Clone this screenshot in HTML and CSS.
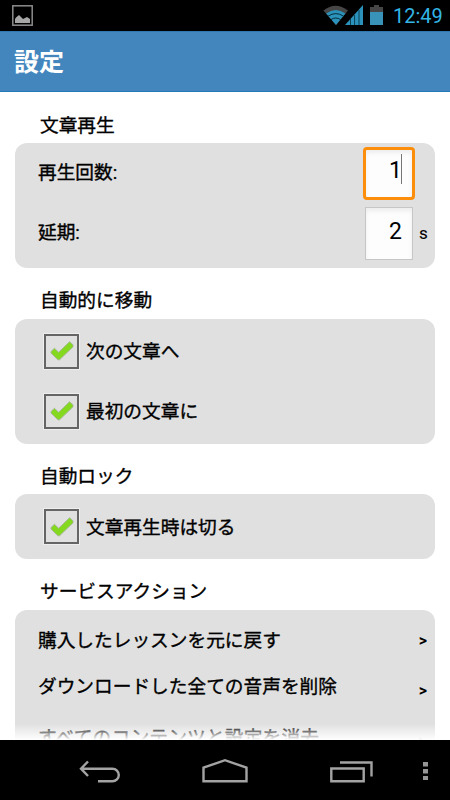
FILE: index.html
```html
<!DOCTYPE html>
<html lang="ja">
<head>
    <meta charset="UTF-8">
    <meta name="viewport" content="width=device-width, initial-scale=1.0">
    <title>設定</title>
    <link rel="stylesheet" href="styles.css">
</head>
<body>
    <div class="status-bar">
        <svg class="picture-icon" width="21" height="21" viewBox="0 0 21 21">
            <rect x="0.8" y="0.8" width="19.4" height="19.4" fill="none" stroke="#8c8c8c" stroke-width="1.5"/>
            <path d="M3 18v-4l1-1.500 3-2.500 4 4 4-2 3 2v4z" fill="#a6a6a6"/>
        </svg>
        <div class="status-icons">
            <svg width="62" height="22" viewBox="0 0 62 22">
                <path d="M13 20L0.4 5.6Q12.5 -4.2 25 5.6z" fill="#464646"/>
                <path d="M13 20L3.2 8.6Q12.7 1.6 22.4 8.6z" fill="#2b93bb"/>
                <path d="M5 11.2Q12.8 6 20.6 11.2M8 14.6Q12.8 11.4 17.6 14.6" fill="none" stroke="#062a38" stroke-width="1"/>
                <path d="M22 20L40 0V20z" fill="#2b93bb"/>
                <path d="M27.5 14V20M31.6 10V20M36 5V20" stroke="#0c3f52" stroke-width="1"/>
                <path d="M47 2h4V0h5v2h4v6H47z" fill="#464646"/>
                <path d="M47 7h13v13H47z" fill="#3993b8"/>
            </svg>
            <span class="clock">12:49</span>
        </div>
    </div>

    <header class="title-bar">
        <h1>設定</h1>
    </header>

    <main class="settings">
        <h2>文章再生</h2>
        <section class="card">
            <div class="row number-row">
                <label for="repeat">再生回数:</label>
                <div class="number focused" id="repeat">1<span class="caret"></span></div>
                <span class="unit"></span>
            </div>
            <div class="row number-row">
                <label for="delay">延期:</label>
                <div class="number" id="delay">2</div>
                <span class="unit">s</span>
            </div>
        </section>

        <h2>自動的に移動</h2>
        <section class="card">
            <div class="row check-row">
                <span class="checkbox"><svg width="24" height="20" viewBox="0 0 24 20"><path class="tick" d="M1 10.5L4.5 7.3L8.6 11.3L19.6 0.8L23 3.8V5.8L9.5 18.8H8L1 12z"/></svg></span>
                <span class="check-text">次の文章へ</span>
            </div>
            <div class="row check-row">
                <span class="checkbox"><svg width="24" height="20" viewBox="0 0 24 20"><path class="tick" d="M1 10.5L4.5 7.3L8.6 11.3L19.6 0.8L23 3.8V5.8L9.5 18.8H8L1 12z"/></svg></span>
                <span class="check-text">最初の文章に</span>
            </div>
        </section>

        <h2>自動ロック</h2>
        <section class="card">
            <div class="row check-row">
                <span class="checkbox"><svg width="24" height="20" viewBox="0 0 24 20"><path class="tick" d="M1 10.5L4.5 7.3L8.6 11.3L19.6 0.8L23 3.8V5.8L9.5 18.8H8L1 12z"/></svg></span>
                <span class="check-text">文章再生時は切る</span>
            </div>
        </section>

        <h2>サービスアクション</h2>
        <section class="card actions">
            <div class="action first"><span>購入したレッスンを元に戻す</span><span class="arrow">&gt;</span></div>
            <div class="action"><span>ダウンロードした全ての音声を削除</span><span class="arrow">&gt;</span></div>
            <div class="action last"><span>すべてのコンテンツと設定を消去</span><span class="arrow">&gt;</span></div>
        </section>
        <div class="fade"></div>
    </main>

    <nav class="nav-bar">
        <svg width="450" height="60" viewBox="0 0 450 60" fill="none" stroke="#a3a3a3" stroke-width="2.4">
            <path d="M81 28.7H112.500A6.3 6.3 0 0 1 112.500 41.3H98M88 21.500L81 28.7L88 36"/>
            <path d="M203.500 41.3V27.7L225 20.2L246.500 27.7V41.3z"/>
            <path d="M331.3 28.500H363.7V41.3H331.3zM340 22.500H371.500V36.500"/>
            <path d="M423 22h5v4.500h-5zM423 29h5v4.500h-5zM423 36h5v4h-5z" fill="#969696" stroke="none"/>
        </svg>
    </nav>
</body>
</html>
```

FILE: styles.css
```css
* {
    margin: 0;
    padding: 0;
    box-sizing: border-box;
}

body {
    width: 450px;
    height: 800px;
    display: flex;
    flex-direction: column;
    overflow: hidden;
    background-color: #fff;
    color: #000;
    font-family: Roboto, "Noto Sans CJK JP", sans-serif;
    font-size: 18.7px;
}

.status-bar {
    display: flex;
    justify-content: space-between;
    height: 31px;
    flex-shrink: 0;
    padding: 5px 8px 0 12px;
    background-color: #000;
}

.status-icons {
    display: flex;
    gap: 8px;
}

.clock {
    width: 49px;
    font-size: 20px;
    line-height: 22px;
    color: #33b5e5;
}

.title-bar {
    height: 61px;
    flex-shrink: 0;
    padding-left: 14px;
    background-color: #4386bd;
    border-top: 1px solid #2f78b2;
    border-bottom: 1px solid #2378b8;
}

.title-bar h1 {
    font-size: 25px;
    font-weight: bold;
    line-height: 62px;
    color: #fff;
}

.settings {
    position: relative;
    height: 648px;
    flex-shrink: 0;
    padding: 0.5px 15px 0;
    overflow: hidden;
    -webkit-text-stroke: 0.35px #000;
}

.settings h2 {
    height: 50.6px;
    padding: 15px 0 0 25px;
    font-size: 18.7px;
    font-weight: normal;
    line-height: 36px;
}

.card {
    padding: 2.5px 0;
    background-color: #e0e0e0;
    border-radius: 12px;
}

.row {
    display: flex;
    align-items: center;
    height: 60px;
    padding: 0 5px 0 23px;
}

.number-row {
    padding-bottom: 5px;
}

.row label {
    flex: 1;
    padding-bottom: 6px;
}

.number {
    width: 48px;
    height: 53px;
    margin-right: 2px;
    padding-right: 10px;
    border: 1px solid #c6c6c6;
    background-color: #fdfdfd;
    box-shadow: inset 0 3px 4px #ededed;
    font-size: 23px;
    line-height: 47px;
    text-align: right;
    -webkit-text-stroke: 0;
}

.number.focused {
    position: relative;
    width: 52px;
    height: 53px;
    margin-right: 0;
    padding-right: 10px;
    border: 3px solid #fc8e0c;
    border-radius: 4px;
    line-height: 42px;
}

.caret {
    position: absolute;
    top: 4px;
    right: 10px;
    width: 1px;
    height: 30px;
    background-color: #777;
}

.unit {
    width: 15px;
    padding-left: 4px;
    font-size: 17px;
    -webkit-text-stroke: 0.1px #000;
}

.check-row {
    gap: 7px;
    padding-left: 29px;
}

.check-text {
    padding-bottom: 3px;
}

.checkbox {
    display: flex;
    align-items: center;
    justify-content: center;
    width: 35px;
    height: 35px;
    border: 2px solid #656565;
    box-shadow: 0 0 0 1px #eeeeee;
}

.tick {
    fill: #84d91e;
    stroke: #a5b895;
    stroke-width: 1;
}

.actions {
    padding-top: 8px;
    height: 200px;
}

.action {
    display: flex;
    justify-content: space-between;
    align-items: flex-start;
    height: 51px;
    padding: 0 8px 0 23px;
    line-height: 46px;
}

.action.first {
    height: 46px;
}

.action.last {
    letter-spacing: 0.2px;
}

.arrow {
    padding-top: 4px;
    font-size: 16px;
    font-weight: bold;
    -webkit-text-stroke: 0;
}

.action.first .arrow {
    padding-top: 0;
}

.fade {
    position: absolute;
    left: 0;
    right: 0;
    bottom: 0;
    height: 16px;
    background: linear-gradient(rgba(255, 255, 255, 0), #fff);
}

.nav-bar {
    height: 60px;
    flex-shrink: 0;
    background-color: #000;
}
```
